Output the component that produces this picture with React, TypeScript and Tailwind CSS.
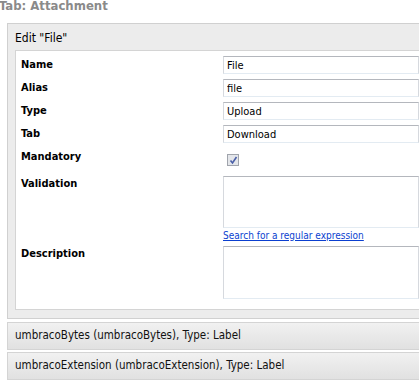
const FONT = { fontFamily: '"DejaVu Sans Condensed", "DejaVu Sans", sans-serif' }

interface Field {
  label: string
  value?: string
  kind: 'text' | 'check'
}

const FIELDS: Field[] = [
  { label: 'Name', value: 'File', kind: 'text' },
  { label: 'Alias', value: 'file', kind: 'text' },
  { label: 'Type', value: 'Upload', kind: 'text' },
  { label: 'Tab', value: 'Download', kind: 'text' },
  { label: 'Mandatory', kind: 'check' },
]

const inputCls =
  'block w-full border border-[#d6d9de] border-t-[#b4b7bd] border-b-[#e3ebf2] bg-white px-[3px] text-[11px] text-black outline-none'

function Bar({ text, top }: { text: string; top: string }) {
  return (
    <div className={`${top} ml-[7px] h-[28px] border border-[#d4d4d4] border-r-0 bg-gradient-to-b from-[#f1f1f1] to-[#e1e1e1] pl-[7px] flex items-center text-[11.5px] text-[#111]`}>
      {text}
    </div>
  )
}

export default function App() {
  return (
    <div className="w-[419px] h-[387px] overflow-hidden bg-white" style={FONT}>
      <h2 className="-mt-[2px] -ml-[1px] h-[25px] text-[13px] font-bold text-[#8a8a8a] leading-[15px]">
        Tab: Attachment
      </h2>
      <div className="ml-[7px] border border-[#d0d0d0] border-r-0 bg-[#ececec] pb-[8px]">
        <div className="h-[26px] pl-[7px] pt-[8px] text-[12px] text-black leading-[13px]">Edit "File"</div>
        <div className="ml-[7px] border border-[#d4d4d4] border-r-0 bg-white pt-[5px] h-[260px]">
          {FIELDS.map(f => (
            <div key={f.label} className="flex h-[23px]">
              <div className="w-[207px] pl-[5px] pt-[1px] text-[11px] font-bold text-black">{f.label}</div>
              <div className="flex-1">
                {f.kind === 'text' && (
                  <input readOnly value={f.value} className={`${inputCls} h-[18px]`} style={FONT} />
                )}
                {f.kind === 'check' && (
                  <div className="ml-[4px] mt-[6px] w-[12px] h-[12px] border border-[#a0a4ac] bg-[#e4e6ea] flex items-center justify-center">
                    <svg width="9" height="9" viewBox="0 0 9 9">
                      <path d="M1.5 4.5 L3.5 7 L7.5 1" stroke="#4a5fa8" strokeWidth="1.6" fill="none" />
                    </svg>
                  </div>
                )}
              </div>
            </div>
          ))}
          <div className="flex mt-[5px]">
            <div className="w-[207px] pl-[5px] text-[11px] font-bold text-black">Validation</div>
            <div className="flex-1">
              <div className={`${inputCls} h-[52px]`} />
              <a href="#" className="block text-[10px] text-[#0b3fd0] underline leading-[13px] mt-[1px]">
                Search for a regular expression
              </a>
            </div>
          </div>
          <div className="flex mt-[4px]">
            <div className="w-[207px] pl-[5px] text-[11px] font-bold text-black">Description</div>
            <div className="flex-1">
              <div className={`${inputCls} h-[53px]`} />
            </div>
          </div>
        </div>
      </div>
      <Bar top="mt-[3px]" text="umbracoBytes (umbracoBytes), Type: Label" />
      <Bar top="mt-[2px]" text="umbracoExtension (umbracoExtension), Type: Label" />
    </div>
  )
}
